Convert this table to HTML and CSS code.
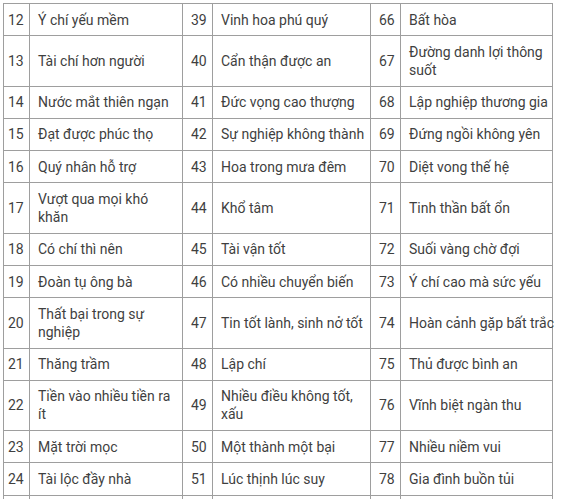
FILE: index.html
```html
<!DOCTYPE html>
<html lang="vi">
<head>
<meta charset="utf-8">
<title>Bảng ý nghĩa số</title>
<link rel="stylesheet" href="styles.css">
</head>
<body>
<table class="meanings">
  <colgroup>
    <col class="c-num1"><col class="c-text2"><col class="c-num"><col class="c-text4"><col class="c-num"><col class="c-text6">
  </colgroup>
  <tbody>
    <tr><td class="num first">12</td><td>Ý chí yếu mềm</td><td class="num">39</td><td>Vinh hoa phú quý</td><td class="num">66</td><td>Bất hòa</td></tr>
    <tr><td class="num first">13</td><td>Tài chí hơn người</td><td class="num">40</td><td>Cẩn thận được an</td><td class="num">67</td><td>Đường danh lợi thông suốt</td></tr>
    <tr><td class="num first">14</td><td>Nước mắt thiên ngạn</td><td class="num">41</td><td>Đức vọng cao thượng</td><td class="num">68</td><td>Lập nghiệp thương gia</td></tr>
    <tr><td class="num first">15</td><td>Đạt được phúc thọ</td><td class="num">42</td><td>Sự nghiệp không thành</td><td class="num">69</td><td>Đứng ngồi không yên</td></tr>
    <tr><td class="num first">16</td><td>Quý nhân hỗ trợ</td><td class="num">43</td><td>Hoa trong mưa đêm</td><td class="num">70</td><td>Diệt vong thế hệ</td></tr>
    <tr><td class="num first">17</td><td>Vượt qua mọi khó khăn</td><td class="num">44</td><td>Khổ tâm</td><td class="num">71</td><td>Tinh thần bất ổn</td></tr>
    <tr><td class="num first">18</td><td>Có chí thì nên</td><td class="num">45</td><td>Tài vận tốt</td><td class="num">72</td><td>Suối vàng chờ đợi</td></tr>
    <tr><td class="num first">19</td><td>Đoàn tụ ông bà</td><td class="num">46</td><td>Có nhiều chuyển biến</td><td class="num">73</td><td>Ý chí cao mà sức yếu</td></tr>
    <tr><td class="num first">20</td><td>Thất bại trong sự nghiệp</td><td class="num">47</td><td>Tin tốt lành, sinh nở tốt</td><td class="num">74</td><td class="nowrap">Hoàn cảnh gặp bất trắc</td></tr>
    <tr><td class="num first">21</td><td>Thăng trầm</td><td class="num">48</td><td>Lập chí</td><td class="num">75</td><td>Thủ được bình an</td></tr>
    <tr><td class="num first">22</td><td>Tiền vào nhiều tiền ra ít</td><td class="num">49</td><td>Nhiều điều không tốt, xấu</td><td class="num">76</td><td>Vĩnh biệt ngàn thu</td></tr>
    <tr><td class="num first">23</td><td>Mặt trời mọc</td><td class="num">50</td><td>Một thành một bại</td><td class="num">77</td><td>Nhiều niềm vui</td></tr>
    <tr><td class="num first">24</td><td>Tài lộc đầy nhà</td><td class="num">51</td><td>Lúc thịnh lúc suy</td><td class="num">78</td><td>Gia đình buồn tủi</td></tr>
    <tr class="next"><td class="num first"></td><td></td><td class="num"></td><td></td><td class="num"></td><td></td></tr>
  </tbody>
</table>
</body>
</html>
```

FILE: styles.css
```css
html, body {
  margin: 0;
  padding: 0;
  background: #ffffff;
  overflow: hidden;
}

body {
  padding: 3px 0 0 3px;
}

.meanings {
  border-collapse: collapse;
  table-layout: fixed;
  width: 550px;
  font-family: Roboto, "Noto Sans", "Liberation Sans", sans-serif;
  font-size: 14px;
  line-height: 18px;
  color: #3f3f3f;
}

.c-num1 { width: 26px; }
.c-text2 { width: 153px; }
.c-num { width: 30px; }
.c-text4 { width: 158px; }
.c-text6 { width: 152px; }

.meanings td {
  border: 1px solid #9e9e9e;
  padding: 6.65px 2px 6.65px 8px;
  vertical-align: middle;
  text-align: left;
}

.meanings td:last-child {
  padding-right: 0;
}

.meanings td.nowrap {
  white-space: nowrap;
  overflow: visible;
}

.meanings td.first {
  padding-left: 4px;
  padding-right: 0;
}

.meanings .next td {
  height: 30px;
}
```
